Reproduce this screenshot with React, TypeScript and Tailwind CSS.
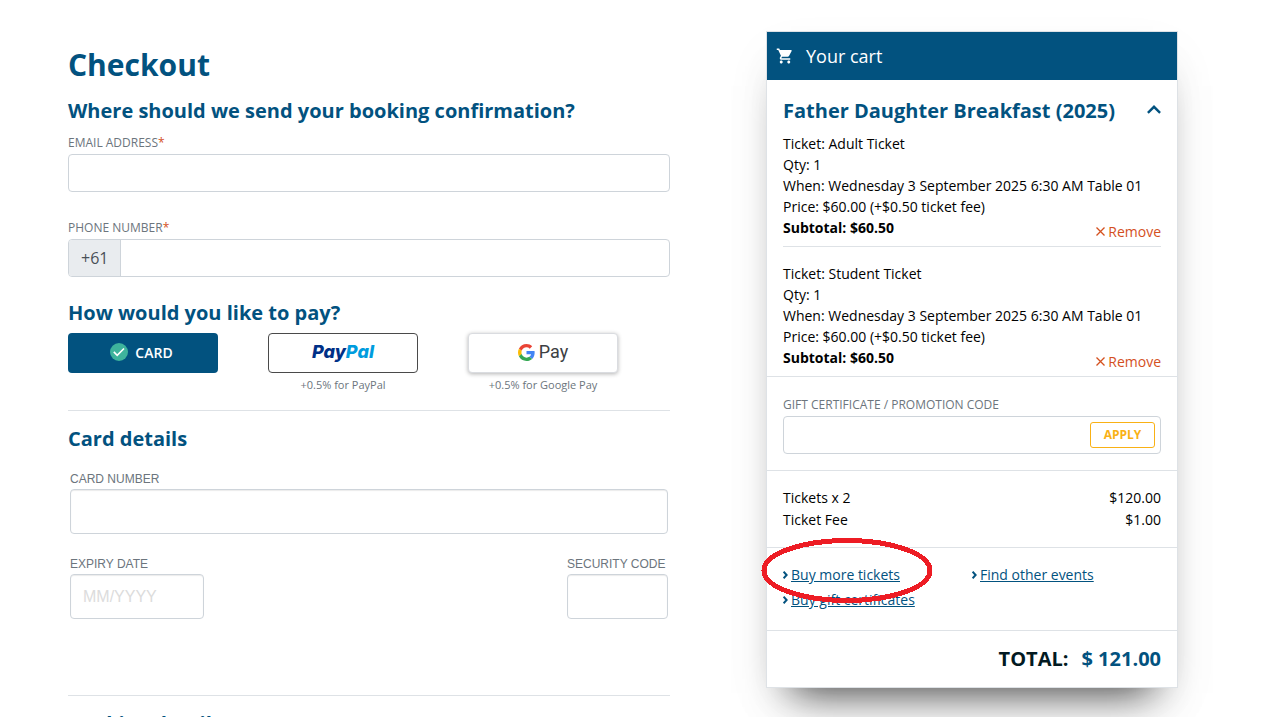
import type { InputHTMLAttributes, ReactNode } from "react";

type Ticket = { name: string; when: string };

const tickets: Ticket[] = [
  { name: "Adult Ticket", when: "Wednesday 3 September 2025 6:30 AM Table 01" },
  { name: "Student Ticket", when: "Wednesday 3 September 2025 6:30 AM Table 01" },
];

function SectionTitle({ children }: { children: ReactNode }) {
  return <h2 className="text-xl leading-6 font-bold text-[#02527f]">{children}</h2>;
}

function FieldLabel({ htmlFor, required, children }: { htmlFor: string; required?: boolean; children: ReactNode }) {
  return (
    <label htmlFor={htmlFor} className="block text-xs leading-4 text-[#6c757d] uppercase">
      {children}
      {required && <span className="text-[#d4501e]">*</span>}
    </label>
  );
}

function CardInput(props: InputHTMLAttributes<HTMLInputElement>) {
  return (
    <input
      {...props}
      className="mt-[2px] block h-[45px] w-full rounded border border-[#ced4da] bg-white px-3 text-base placeholder:text-[#dcdcdc] inset-shadow-[0_1px_1px_rgba(0,0,0,0.08)]"
    />
  );
}

function CartIcon() {
  return (
    <svg viewBox="0 0 24 24" className="size-[18px]" fill="currentColor" aria-hidden="true">
      <path d="M7 18c-1.1 0-1.99.9-1.99 2S5.9 22 7 22s2-.9 2-2-.9-2-2-2zM1 2v2h2l3.6 7.59-1.35 2.45c-.16.28-.25.61-.25.96 0 1.1.9 2 2 2h12v-2H7.42c-.14 0-.25-.11-.25-.25l.03-.12.9-1.63h7.45c.75 0 1.41-.41 1.75-1.03l3.58-6.49c.08-.14.12-.31.12-.48 0-.55-.45-1-1-1H5.21l-.94-2H1zm16 16c-1.1 0-1.99.9-1.99 2s.89 2 1.99 2 2-.9 2-2-.9-2-2-2z" />
    </svg>
  );
}

function CheckIcon() {
  return (
    <svg viewBox="0 0 18 18" className="mb-[2px] size-[18px]" aria-hidden="true">
      <circle cx="9" cy="9" r="9" fill="#3eb39c" />
      <path d="M3.8 8.9 7.2 12.3 14 5.5" fill="none" stroke="#fff" strokeWidth="1.6" />
    </svg>
  );
}

function GoogleIcon() {
  return (
    <svg viewBox="0 0 48 48" className="size-[17px]" aria-hidden="true">
      <path fill="#EA4335" d="M24 9.5c3.54 0 6.71 1.22 9.21 3.6l6.85-6.85C35.9 2.38 30.47 0 24 0 14.62 0 6.51 5.38 2.56 13.22l7.98 6.19C12.43 13.72 17.74 9.5 24 9.5z" />
      <path fill="#4285F4" d="M46.98 24.55c0-1.57-.15-3.09-.38-4.55H24v9.02h12.94c-.58 2.96-2.26 5.48-4.78 7.18l7.73 6c4.51-4.18 7.09-10.36 7.09-17.65z" />
      <path fill="#FBBC05" d="M10.53 28.59c-.48-1.45-.76-2.99-.76-4.59s.27-3.14.76-4.59l-7.98-6.19C.92 16.46 0 20.12 0 24c0 3.88.92 7.54 2.56 10.78l7.97-6.19z" />
      <path fill="#34A853" d="M24 48c6.48 0 11.93-2.13 15.89-5.81l-7.73-6c-2.15 1.45-4.92 2.3-8.16 2.3-6.26 0-11.57-4.22-13.47-9.91l-7.98 6.19C6.51 42.62 14.62 48 24 48z" />
    </svg>
  );
}

function LinkItem({ children }: { children: ReactNode }) {
  return (
    <li className="flex items-center gap-[3px] text-[#02527f]">
      <svg viewBox="0 0 5 8" className="h-2 w-[5px]" fill="none" stroke="currentColor" strokeWidth="2" aria-hidden="true">
        <path d="M0.6 0.8 3.6 4 0.6 7.2" />
      </svg>
      <a href="#" className="underline">{children}</a>
    </li>
  );
}

function CartItem({ ticket, last }: { ticket: Ticket; last: boolean }) {
  return (
    <li className={last ? "relative mx-4 pb-2" : "relative mx-4 mb-4 border-b border-[#dee2e6] pb-2"}>
      <p>Ticket: {ticket.name}</p>
      <p>Qty: 1</p>
      <p>When: {ticket.when}</p>
      <p>Price: $60.00 (+$0.50 ticket fee)</p>
      <p className="font-bold">Subtotal: $60.50</p>
      <button type="button" className="absolute right-0 bottom-1 flex items-center gap-[3px] text-[#d4501e]">
        <svg viewBox="0 0 9 9" className="size-[9px]" fill="none" stroke="currentColor" strokeWidth="1.3" aria-hidden="true">
          <path d="M0.5 0.5 8.5 8.5M8.5 0.5 0.5 8.5" />
        </svg>
        Remove
      </button>
    </li>
  );
}

function CheckoutForm() {
  return (
    <form className="pt-4">
      <h1 className="mb-4 text-3xl leading-9 font-bold text-[#02527f]">Checkout</h1>

      <SectionTitle>Where should we send your booking confirmation?</SectionTitle>
      <div className="mt-3">
        <FieldLabel htmlFor="email" required>Email address</FieldLabel>
        <input id="email" type="email" className="mt-[3px] block h-[38px] w-full rounded border border-[#ced4da] px-3 text-base" />
      </div>
      <div className="mt-7 mb-6">
        <FieldLabel htmlFor="phone" required>Phone number</FieldLabel>
        <div className="mt-[3px] flex h-[38px] overflow-hidden rounded border border-[#ced4da]">
          <span className="flex items-center border-r border-[#ced4da] bg-[#e9ecef] px-3 text-base text-[#495057]">+61</span>
          <input id="phone" type="tel" className="min-w-0 flex-1 px-3 text-base" />
        </div>
      </div>

      <SectionTitle>How would you like to pay?</SectionTitle>
      <div className="mt-2 flex gap-[50px] text-center text-[11px] leading-4 text-[#6c757d]">
        <div className="w-[150px]">
          <button type="button" className="flex h-10 w-full items-center justify-center gap-[7px] rounded bg-[#02527f] pr-[3px] text-sm font-semibold text-white">
            <CheckIcon />
            CARD
          </button>
        </div>
        <div className="w-[150px]">
          <button type="button" aria-label="PayPal" className="mb-1 flex h-10 w-full items-center justify-center rounded border border-[#4a4a4a] bg-white pb-[2px] font-[Inter,sans-serif] text-lg font-extrabold italic text-[#003087]">
            Pay<span className="text-[#009cde]">Pal</span>
          </button>
          +0.5% for PayPal
        </div>
        <div className="w-[150px]">
          <button type="button" aria-label="Google Pay" className="mb-1 flex h-10 w-full items-center justify-center gap-1 rounded border border-[#dadce0] bg-white pb-[2px] font-[Roboto,sans-serif] text-lg text-[#3c4043] shadow-[0_1px_4px_rgba(0,0,0,0.3)]">
            <GoogleIcon />
            Pay
          </button>
          +0.5% for Google Pay
        </div>
      </div>

      <hr className="mt-[17px] mb-4 border-[#dee2e6]" />

      <SectionTitle>Card details</SectionTitle>
      <div className="mx-[2px] mt-5 font-['Liberation_Sans',sans-serif]">
        <FieldLabel htmlFor="card-number">Card number</FieldLabel>
        <CardInput id="card-number" inputMode="numeric" />
        <div className="mt-[22px] flex justify-between">
          <div className="w-[134px]">
            <FieldLabel htmlFor="expiry">Expiry date</FieldLabel>
            <CardInput id="expiry" placeholder="MM/YYYY" />
          </div>
          <div className="w-[101px]">
            <FieldLabel htmlFor="security">Security code</FieldLabel>
            <CardInput id="security" inputMode="numeric" />
          </div>
        </div>
      </div>

      <hr className="mt-[76px] mb-4 border-[#dee2e6]" />

      <SectionTitle>Booking details</SectionTitle>
    </form>
  );
}

function Cart() {
  return (
    <aside className="border border-[#dee2e6] bg-white text-sm leading-[21px] text-black shadow-[0_30px_40px_-25px_rgba(0,0,0,0.75),0_20px_50px_rgba(0,0,0,0.04)]">
      <div className="flex h-12 items-center gap-3 bg-[#02527f] px-[9px] text-lg text-white">
        <CartIcon />
        Your cart
      </div>

      <div className="mt-[19px] mb-[10px] flex items-center justify-between px-4">
        <SectionTitle>Father Daughter Breakfast (2025)</SectionTitle>
        <button type="button" aria-label="Collapse event" className="mb-1 text-[#02527f]">
          <svg viewBox="0 0 14 9" className="h-[9px] w-[14px]" fill="none" stroke="currentColor" strokeWidth="2.4" aria-hidden="true">
            <path d="M0.9 7.9 7 1.8 13.1 7.9" />
          </svg>
        </button>
      </div>

      <ul>
        {tickets.map((ticket, i) => (
          <CartItem key={ticket.name} ticket={ticket} last={i === tickets.length - 1} />
        ))}
      </ul>

      <div className="border-t border-[#dee2e6] px-4 pt-5 pb-4">
        <FieldLabel htmlFor="promo">Gift certificate / promotion code</FieldLabel>
        <div className="mt-[3px] flex h-[38px] items-center rounded border border-[#ced4da] pr-[5px]">
          <input id="promo" className="h-full min-w-0 flex-1 px-3 text-base" />
          <button type="button" className="h-[26px] w-[65px] rounded-[3px] border border-[#f9b115] text-xs font-bold text-[#f9b115]">APPLY</button>
        </div>
      </div>

      <dl className="grid grid-cols-2 border-t border-[#dee2e6] px-4 py-4 leading-[22px]">
        <dt>Tickets x 2</dt>
        <dd className="text-right">$120.00</dd>
        <dt>Ticket Fee</dt>
        <dd className="text-right">$1.00</dd>
      </dl>

      <div className="relative border-t border-[#dee2e6] px-4 pt-4 pb-5">
        <ul className="grid grid-cols-2 gap-y-1">
          <LinkItem>Buy more tickets</LinkItem>
          <LinkItem>Find other events</LinkItem>
          <LinkItem>Buy gift certificates</LinkItem>
        </ul>
        <svg viewBox="0 0 172 67" className="pointer-events-none absolute -top-[11px] -left-[6px] h-[67px] w-[172px]" shapeRendering="crispEdges" aria-hidden="true">
          <ellipse cx="86" cy="33.5" rx="83" ry="30" fill="none" stroke="#ed1c24" strokeWidth="5" />
        </svg>
      </div>

      <div className="flex justify-end gap-[13px] border-t border-[#dee2e6] px-4 py-4 text-xl leading-6 font-bold">
        <span className="text-[#021a22]">TOTAL:</span>
        <span className="text-[#02527f]">$ 121.00</span>
      </div>
    </aside>
  );
}

export default function App() {
  return (
    <main className="grid grid-cols-[602fr_412fr] items-start gap-24 bg-white pt-[31px] pr-[98px] pl-[68px] font-['Open_Sans',sans-serif]">
      <CheckoutForm />
      <Cart />
    </main>
  );
}
